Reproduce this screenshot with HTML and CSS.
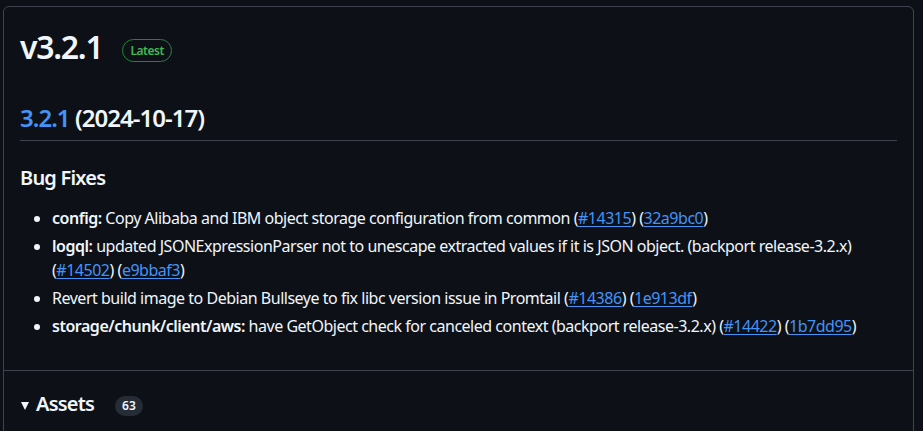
FILE: index.html
```html
<!DOCTYPE html>
<html lang="en">
<head>
<meta charset="utf-8">
<title>v3.2.1</title>
<link rel="stylesheet" href="styles.css">
</head>
<body>
<div class="release">
  <div class="release-body">
    <div class="release-header">
      <h1 class="release-title">v3.2.1</h1>
      <span class="label-latest">Latest</span>
    </div>
    <div class="markdown">
      <h2><a href="#">3.2.1</a> (2024-10-17)</h2>
      <h3>Bug Fixes</h3>
      <ul>
        <li><strong>config:</strong> Copy Alibaba and IBM object storage configuration from common (<a href="#">#14315</a>) (<a href="#">32a9bc0</a>)</li>
        <li><strong>logql:</strong> updated JSONExpressionParser not to unescape extracted values if it is JSON object. (backport release-3.2.x) (<a href="#">#14502</a>) (<a href="#">e9bbaf3</a>)</li>
        <li>Revert build image to Debian Bullseye to fix libc version issue in Promtail (<a href="#">#14386</a>) (<a href="#">1e913df</a>)</li>
        <li><strong>storage/chunk/client/aws:</strong> have GetObject check for canceled context (backport release-3.2.x) (<a href="#">#14422</a>) (<a href="#">1b7dd95</a>)</li>
      </ul>
    </div>
  </div>
  <div class="release-footer">
    <div class="assets-summary">
      <span class="caret"></span>
      <span class="assets-title">Assets</span>
      <span class="counter">63</span>
    </div>
  </div>
</div>
</body>
</html>
```
FILE: styles.css
```css
html, body {
  margin: 0;
  background: #0d1117;
}
body {
  font-family: "Noto Sans", "Open Sans", sans-serif;
  color: #f0f6fc;
  font-size: 16px;
  line-height: 1.5;
  letter-spacing: -0.03em;
}
.release {
  margin: 6px 9px 0 3px;
  border: 1px solid #3d444d;
  border-radius: 6px;
  background: #0d1117;
}
.release-body {
  padding: 16px;
}
.release-header {
  display: flex;
  align-items: center;
  gap: 20px;
  height: 48px;
}
.release-title {
  margin: 0;
  font-size: 32px;
  font-weight: 600;
  line-height: 48px;
  letter-spacing: -0.04em;
}
.label-latest {
  display: inline-block;
  border: 1px solid #238636;
  color: #3fb950;
  border-radius: 12px;
  font-size: 12px;
  font-weight: 600;
  line-height: 21px;
  padding: 0 7px;
  margin-top: 6px;
}
.markdown {
  margin-top: 32px;
}
.markdown h2 {
  margin: 0 0 16px;
  font-size: 24px;
  font-weight: 600;
  line-height: 1.25;
  padding-bottom: 7px;
  border-bottom: 1px solid #3d444d;
  letter-spacing: -0.04em;
}
.markdown h3 {
  margin: 24px 0 16px;
  font-size: 20px;
  font-weight: 600;
  line-height: 1.25;
  letter-spacing: -0.04em;
}
.markdown a {
  color: #4493f8;
  text-decoration: underline;
  text-underline-offset: 2px;
}
.markdown h2 a {
  text-decoration: none;
}
.markdown ul {
  margin: 0 0 16px;
  padding-left: 32px;
}
.markdown li + li {
  margin-top: 4px;
}
.markdown strong {
  font-weight: 600;
}
.release-footer {
  border-top: 1px solid #3d444d;
  padding: 18px 16px 40px;
}
.assets-summary {
  display: flex;
  align-items: center;
  height: 30px;
}
.caret {
  width: 0;
  height: 0;
  border-left: 4px solid transparent;
  border-right: 4px solid transparent;
  border-top: 8px solid #f0f6fc;
  margin-left: 1px;
  margin-right: 7px;
  margin-top: 3px;
}
.assets-title {
  font-size: 20px;
  font-weight: 600;
  line-height: 30px;
  letter-spacing: -0.04em;
}
.counter {
  margin-left: 21px;
  background: #262c36;
  border-radius: 10px;
  font-size: 12px;
  font-weight: 600;
  line-height: 20px;
  padding: 0 7px;
  margin-top: 3px;
  letter-spacing: 0;
}
```
